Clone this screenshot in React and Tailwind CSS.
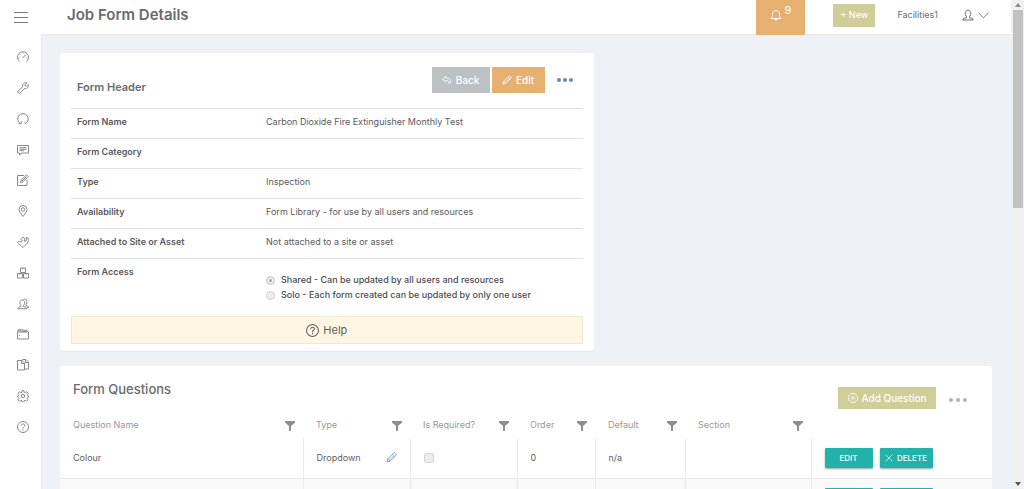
import clsx from "clsx"

function Icon({ className = "w-3 h-3", children }) {
  return (
    <svg
      viewBox="0 0 24 24"
      fill="none"
      stroke="currentColor"
      strokeWidth="2"
      aria-hidden="true"
      className={clsx("shrink-0", className)}
    >
      {children}
    </svg>
  )
}

const PENCIL = (
  <>
    <path d="M2 22l2-7L17 2c2-1 6 3 5 5L9 20z" />
    <path d="M14 5l5 5M4 15l5 5M17 8L7 18" strokeWidth="1.5" />
  </>
)

const HELP = (
  <>
    <circle cx="12" cy="12" r="11" />
    <path d="M8.5 9.5c0-5 7-4.500 7-.5 0 2.500-3.500 2.500-3.500 6" />
    <path d="M12 16.500v2.500" />
  </>
)

const USER = (
  <path d="M9 15.500C5 12 5.500 2 12 2s7 10 3 13.500v2l6 1.500c1 .5 1.500 1.500 1.500 3h-21c0-1.500.5-2.500 1.500-3l6-1.500z" />
)

const NAV_ITEMS = [
  {
    label: "Dashboard",
    icon: (
      <>
        <path d="M5 21a11 11 0 1 1 14 0" />
        <path d="M11 14l6-6M5 14H3M7 8L5.500 6.500M12 5V3M21 14h-2" />
      </>
    ),
  },
  {
    label: "Jobs",
    icon: <path d="M2 18L11.500 9.500C10 5 14 0 19.500 2L16 5.500l.5 2.500 2.500.5L22.500 5c1.500 5.500-3 9.500-8 8L6 22.500c-2.500 1.500-5.500-2-4-4.500z" />,
  },
  {
    label: "Recurring",
    icon: (
      <>
        <path d="M7 21a10.500 10.500 0 1 1 10 0" />
        <path d="M3 21.500h5.500v-5M17 21l-2-3" />
      </>
    ),
  },
  {
    label: "Messages",
    icon: (
      <>
        <path d="M1 3h22v15H10l-5 4v-4H1z" />
        <path d="M5 7.500h14M5 10.500h14M5 13.500h9" />
      </>
    ),
  },
  {
    label: "Forms",
    icon: (
      <>
        <path d="M14 3H1v20h19V12" />
        <path d="M7 17l1.500-5L19 1.500l3.500 3.500L12 15.500zM10 14l9-9" />
      </>
    ),
  },
  {
    label: "Sites",
    icon: (
      <>
        <path d="M12 23C7 16.500 4 13 4 9a8 8 0 0 1 16 0c0 4-3 7.500-8 14z" />
        <circle cx="12" cy="9" r="3.500" />
      </>
    ),
  },
  {
    label: "Contractors",
    icon: (
      <path d="M12 23L1.500 13.500C2 11 4 10 6 11l2 1.500L11 10 7.500 6.500 12 2.500l4 3.500-1.500 4 3 .5 1.500-3-1-4.500 4 1 1 5.500-3 5.500z" />
    ),
  },
  {
    label: "Assets",
    icon: (
      <>
        <path d="M7 2h10v9H7zM1 13h10v9H1zM13 13h10v9H13z" />
        <path d="M12 2v3M6 13v3M18 13v3" strokeWidth="1.500" />
      </>
    ),
  },
  {
    label: "Users",
    icon: (
      <>
        <path d="M8 15C4 11 5 4 10.500 4s6.500 7 2.500 11v2l5 1.500c1 .5 1.500 1.500 1.500 3h-18c0-1.500.5-2.500 1.500-3L8 17z" />
        <path d="M13 3c6-4 9 5 5 10v2l4 1.500c1 .5 1 1.500 1 3h-3" />
      </>
    ),
  },
  {
    label: "Wallet",
    icon: (
      <>
        <path d="M1 8h22v14H1zM1 8l2-5 17 2 1 3" />
        <path d="M5 14v2M3 5.500l16 2" />
      </>
    ),
  },
  {
    label: "Documents",
    icon: (
      <>
        <path d="M1 3h9l5 5v14H1zM9 3v6h6" />
        <path d="M11 3V1h7l5 5v14h-8M17 1v6h6" />
      </>
    ),
  },
  {
    label: "Settings",
    icon: (
      <>
        <path d="M10 1.500h4l.5 3 2.500 1 2.500-2 3 3-2 2.500 1 2.500 2 .5v2l-2.500.5-1 2.500 2 2.500-3 3-2.500-2-2.500 1-.5 2.500h-3l-.5-2.500-2.500-1-2.500 2-3-3 2-2.500-1-2.500-2.500-.5v-2l2.500-.5 1-2.500-2-2.500 3-3 2.500 2 2.500-1z" />
        <circle cx="12" cy="12" r="3.500" />
      </>
    ),
  },
  { label: "Help", icon: HELP },
]

const DETAILS = [
  ["Form Name", "Carbon Dioxide Fire Extinguisher Monthly Test"],
  ["Form Category", ""],
  ["Type", "Inspection"],
  ["Availability", "Form Library - for use by all users and resources"],
  ["Attached to Site or Asset", "Not attached to a site or asset"],
]

const COLUMNS = [
  { label: "Question Name" },
  { label: "Type", width: "w-[107px]" },
  { label: "Is Required?", width: "w-[107px]" },
  { label: "Order", width: "w-[78px]" },
  { label: "Default", width: "w-[90px]" },
  { label: "Section", width: "w-[126px]" },
]

const QUESTIONS = [
  { name: "Colour", type: "Dropdown", order: "0", fallback: "n/a" },
  { name: "", type: "", order: "", fallback: "" },
]

function Dots({ className, label }) {
  return (
    <button aria-label={label} className={clsx("flex", className)}>
      <span className="w-1 h-1 rounded-full bg-current" />
      <span className="w-1 h-1 rounded-full bg-current" />
      <span className="w-1 h-1 rounded-full bg-current" />
    </button>
  )
}

function Header() {
  return (
    <header className="flex items-center h-[34px] shrink-0 bg-white text-[#6b6a6f] shadow-[0_1px_1px_#e6e9ec]">
      <button aria-label="Toggle menu" className="flex flex-col gap-1 ml-[14px] w-[14px]">
        <span className="h-px bg-[#77767a]" />
        <span className="h-px bg-[#77767a]" />
        <span className="h-px bg-[#77767a]" />
      </button>
      <h1 className="ml-[39px] mb-1 text-[15px] font-semibold">Job Form Details</h1>
      <button
        aria-label="Notifications"
        className="flex justify-center self-start gap-[2px] ml-auto w-[49px] h-[35px] pt-1 bg-[#e6b071] text-white"
      >
        <Icon className="w-3 h-3 mt-[5px]">
          <path d="M2 19c3-3 3-5 3-9 0-9 14-9 14 0 0 4 0 6 3 9zM9 20c0 3 6 3 6 0" />
        </Icon>
        <span className="text-[11px] leading-3">9</span>
      </button>
      <button className="ml-7 mb-1 w-[42px] h-[23px] bg-[#cfcd98] text-[9px] font-medium text-white">+ New</button>
      <span className="ml-[22px] mb-1 text-[9px] whitespace-nowrap">Facilities1</span>
      <button aria-label="Account" className="flex items-center gap-1 ml-6 mr-[22px] mb-1">
        <Icon>{USER}</Icon>
        <Icon className="w-[11px] h-[11px]">
          <path d="M1 6l11 11L23 6" />
        </Icon>
      </button>
    </header>
  )
}

function Sidebar() {
  return (
    <nav className="w-[42px] shrink-0 pt-2 bg-white border-r border-[#e4e9eb] text-[#8a898e]">
      <div className="flex flex-col h-[400px]">
        {NAV_ITEMS.map((item) => (
          <a
            key={item.label}
            href="#"
            aria-label={item.label}
            className="flex flex-1 items-center justify-center pl-1"
          >
            <Icon>{item.icon}</Icon>
          </a>
        ))}
      </div>
    </nav>
  )
}

function FormHeaderCard() {
  return (
    <section className="col-span-7 px-[11px] pt-[14px] pb-[7px] bg-white rounded-[3px] shadow-[0_1px_1px_#e2e6ea]">
      <div className="flex items-start h-[41px]">
        <h2 className="pl-[6px] pt-3 text-[11px] font-semibold text-[#6b6a6f]">Form Header</h2>
        <div className="flex items-center gap-[2px] ml-auto text-[10px] font-medium text-white">
          <button className="flex items-center justify-center gap-1 w-[58px] h-[26px] bg-[#bcc1c4]">
            <Icon className="w-[10px] h-[10px]">
              <path d="M9 3L1 10l8 7v-4c6-1 8 3 8 8 8-5 5-14-8-14z" />
            </Icon>
            Back
          </button>
          <button className="flex items-center justify-center gap-1 w-[53px] h-[26px] bg-[#e6b071]">
            <Icon className="w-[10px] h-[10px]">{PENCIL}</Icon>
            Edit
          </button>
          <Dots label="More form actions" className="gap-[2px] ml-[10px] mr-[10px] text-[#7488a8]" />
        </div>
      </div>
      <dl className="text-[9px] leading-3 text-[#5a595d]">
        {DETAILS.map(([label, value]) => (
          <div key={label} className="flex h-[30px] px-[6px] pt-[7px] border-t border-[#e1e2e3]">
            <dt className="w-[189px] font-semibold">{label}</dt>
            <dd>{value}</dd>
          </div>
        ))}
        <div className="flex h-[58px] px-[6px] pt-[7px] border-t border-[#e1e2e3]">
          <dt className="w-[189px] font-semibold">Form Access</dt>
          <dd className="flex flex-col gap-[3px] pt-2 font-medium text-[#4d4c50]">
            <Access label="Shared - Can be updated by all users and resources" checked />
            <Access label="Solo - Each form created can be updated by only one user" />
          </dd>
        </div>
      </dl>
      <button className="flex items-center justify-center gap-1 w-full h-7 bg-[#fff7e1] border border-[#f0e8cf] text-[11px] text-[#5f5d62]">
        <Icon className="w-[13px] h-[13px]">{HELP}</Icon>
        Help
      </button>
    </section>
  )
}

function Access({ label, checked = false }) {
  return (
    <label className="flex items-center gap-[6px]">
      <input
        type="radio"
        name="access"
        defaultChecked={checked}
        className="appearance-none w-[9px] h-[9px] rounded-full border border-[#cfd0d1] bg-[#eeeeee] checked:bg-[#a8a8a8] checked:shadow-[inset_0_0_0_2px_#eeeeee]"
      />
      {label}
    </label>
  )
}

function QuestionRow({ question, index }) {
  const cell = "pl-[13px] pr-2 border-r border-[#ebebec]"
  return (
    <tr className={clsx("h-10 border-b border-[#ebebec]", index % 2 === 1 && "bg-[#f9f9f9]")}>
      <td className={cell}>{question.name}</td>
      <td className={cell}>
        <div className="flex items-center justify-between">
          {question.type}
          {question.type && (
            <button aria-label="Edit type" className="mr-[5px] text-[#6e97bd]">
              <Icon className="w-[11px] h-[11px]">{PENCIL}</Icon>
            </button>
          )}
        </div>
      </td>
      <td className={cell}>
        <input
          type="checkbox"
          aria-label="Is required"
          className="block appearance-none w-[10px] h-[10px] rounded-[2px] border border-[#d5d6d8] bg-[#ececee]"
        />
      </td>
      <td className={cell}>{question.order}</td>
      <td className={cell}>{question.fallback}</td>
      <td className={cell} />
      <td className="pl-[13px]">
        <div className="flex gap-[7px] text-[8px] font-medium text-white">
          <button className="w-12 h-5 bg-[#22b2aa] rounded-[1px] shadow-[0_1px_2px_#9aa5a8]">EDIT</button>
          <button className="flex items-center justify-center gap-1 w-[53px] h-5 bg-[#22b2aa] rounded-[1px] shadow-[0_1px_2px_#9aa5a8]">
            <Icon className="w-2 h-2">
              <path d="M2 2l20 20M22 2L2 22" />
            </Icon>
            DELETE
          </button>
        </div>
      </td>
    </tr>
  )
}

function QuestionsCard() {
  return (
    <section className="col-span-12 bg-white rounded-[3px]">
      <div className="flex items-start h-[46px] pt-[15px] pl-[13px]">
        <h2 className="text-[13px] leading-4 font-medium text-[#6b6a6f]">Form Questions</h2>
        <div className="flex items-center ml-auto pt-[6px]">
          <button className="flex items-center justify-center gap-1 w-[98px] h-[22px] bg-[#cfcd98] text-[10px] font-medium text-white">
            <Icon className="w-[10px] h-[10px]">
              <circle cx="12" cy="12" r="11" />
              <path d="M12 6v12M6 12h12" />
            </Icon>
            Add Question
          </button>
          <Dots label="More question actions" className="gap-[3px] pt-1 ml-[13px] mr-[25px] text-[#b3b3b5]" />
        </div>
      </div>
      <table className="w-full table-fixed text-[9px] text-[#5f5e63]">
        <thead>
          <tr className="h-[26px] text-left text-[#98979b]">
            {COLUMNS.map((column) => (
              <th key={column.label} className={clsx("pl-[13px] pr-2 font-normal", column.width)}>
                <div className="flex items-center justify-between">
                  {column.label}
                  <button aria-label={`Filter ${column.label}`} className="pt-[2px] text-[#8f8d92]">
                    <svg viewBox="0 0 10 10" fill="currentColor" className="w-[10px] h-[10px]">
                      <path d="M0 0h10v1.500L6 5v5H4V5L0 1.500z" />
                    </svg>
                  </button>
                </div>
              </th>
            ))}
            <th className="w-[181px]" aria-label="Actions" />
          </tr>
        </thead>
        <tbody>
          {QUESTIONS.map((question, i) => (
            <QuestionRow key={i} question={question} index={i} />
          ))}
        </tbody>
      </table>
    </section>
  )
}

function ScrollRail() {
  return (
    <div className="flex flex-col items-center w-[13px] shrink-0 py-[3px] bg-[#f1f1f1]">
      <svg viewBox="0 0 6 4" className="w-[6px] h-1 mb-[3px] fill-[#8a8a8a]">
        <path d="M0 4l3-4 3 4z" />
      </svg>
      <div className="w-[10px] h-[41%] bg-[#c1c1c1]" />
      <svg viewBox="0 0 6 4" className="w-[6px] h-1 mt-auto fill-[#555555]">
        <path d="M0 0l3 4 3-4z" />
      </svg>
    </div>
  )
}

export default function App() {
  return (
    <div className="flex h-screen overflow-hidden font-['Inter',sans-serif] bg-[#eef2f6]">
      <div className="flex flex-col flex-1 min-w-0">
        <Header />
        <div className="flex flex-1 min-h-0">
          <Sidebar />
          <main className="grid grid-cols-12 content-start gap-x-6 gap-y-[15px] flex-1 min-w-0 pl-[18px] pr-[19px] pt-[19px] overflow-hidden">
            <FormHeaderCard />
            <QuestionsCard />
          </main>
        </div>
      </div>
      <ScrollRail />
    </div>
  )
}
